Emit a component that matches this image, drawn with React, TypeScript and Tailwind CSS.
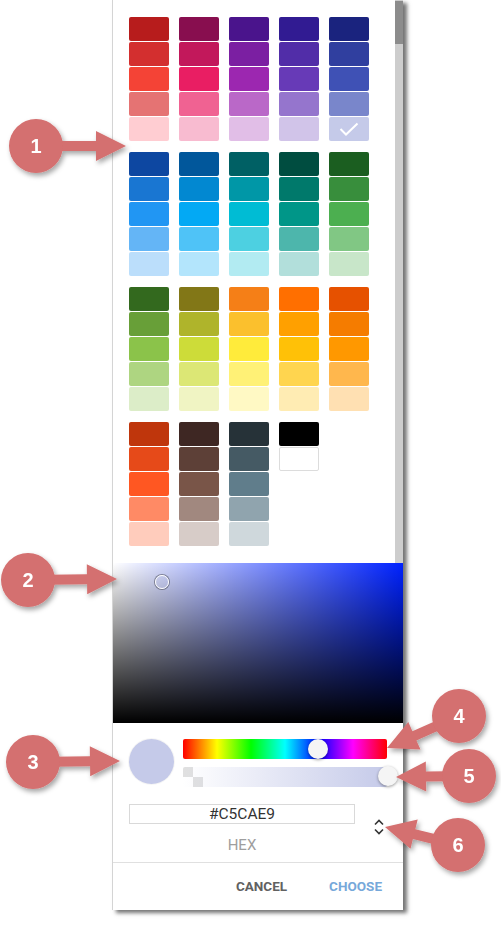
import React from 'react';

// Material palette columns, shades 900 / 700 / 500 / 300 / 100
const swatchGroups: string[][][] = [
  [
    ['bg-[#b71c1c]', 'bg-[#d32f2f]', 'bg-[#f44336]', 'bg-[#e57373]', 'bg-[#ffcdd2]'],
    ['bg-[#880e4f]', 'bg-[#c2185b]', 'bg-[#e91e63]', 'bg-[#f06292]', 'bg-[#f8bbd0]'],
    ['bg-[#4a148c]', 'bg-[#7b1fa2]', 'bg-[#9c27b0]', 'bg-[#ba68c8]', 'bg-[#e1bee7]'],
    ['bg-[#311b92]', 'bg-[#512da8]', 'bg-[#673ab7]', 'bg-[#9575cd]', 'bg-[#d1c4e9]'],
    ['bg-[#1a237e]', 'bg-[#303f9f]', 'bg-[#3f51b5]', 'bg-[#7986cb]', 'bg-[#c5cae9]'],
  ],
  [
    ['bg-[#0d47a1]', 'bg-[#1976d2]', 'bg-[#2196f3]', 'bg-[#64b5f6]', 'bg-[#bbdefb]'],
    ['bg-[#01579b]', 'bg-[#0288d1]', 'bg-[#03a9f4]', 'bg-[#4fc3f7]', 'bg-[#b3e5fc]'],
    ['bg-[#006064]', 'bg-[#0097a7]', 'bg-[#00bcd4]', 'bg-[#4dd0e1]', 'bg-[#b2ebf2]'],
    ['bg-[#004d40]', 'bg-[#00796b]', 'bg-[#009688]', 'bg-[#4db6ac]', 'bg-[#b2dfdb]'],
    ['bg-[#1b5e20]', 'bg-[#388e3c]', 'bg-[#4caf50]', 'bg-[#81c784]', 'bg-[#c8e6c9]'],
  ],
  [
    ['bg-[#33691e]', 'bg-[#689f38]', 'bg-[#8bc34a]', 'bg-[#aed581]', 'bg-[#dcedc8]'],
    ['bg-[#827717]', 'bg-[#afb42b]', 'bg-[#cddc39]', 'bg-[#dce775]', 'bg-[#f0f4c3]'],
    ['bg-[#f57f17]', 'bg-[#fbc02d]', 'bg-[#ffeb3b]', 'bg-[#fff176]', 'bg-[#fff9c4]'],
    ['bg-[#ff6f00]', 'bg-[#ffa000]', 'bg-[#ffc107]', 'bg-[#ffd54f]', 'bg-[#ffecb3]'],
    ['bg-[#e65100]', 'bg-[#f57c00]', 'bg-[#ff9800]', 'bg-[#ffb74d]', 'bg-[#ffe0b2]'],
  ],
  [
    ['bg-[#bf360c]', 'bg-[#e64a19]', 'bg-[#ff5722]', 'bg-[#ff8a65]', 'bg-[#ffccbc]'],
    ['bg-[#3e2723]', 'bg-[#5d4037]', 'bg-[#795548]', 'bg-[#a1887f]', 'bg-[#d7ccc8]'],
    ['bg-[#263238]', 'bg-[#455a64]', 'bg-[#607d8b]', 'bg-[#90a4ae]', 'bg-[#cfd8dc]'],
    ['bg-black', 'bg-white border border-[#dcdcdc]'],
    [],
  ],
];

const SELECTED = 'bg-[#c5cae9]';

// numbered callouts: circle centre, then where the arrow points
const callouts = [
  { n: 1, cx: 36, cy: 146, tx: 126, ty: 146 },
  { n: 2, cx: 28, cy: 580, tx: 117, ty: 579 },
  { n: 3, cx: 33, cy: 762, tx: 120, ty: 761 },
  { n: 4, cx: 459, cy: 716, tx: 387, ty: 748 },
  { n: 5, cx: 469, cy: 776, tx: 396, ty: 777 },
  { n: 6, cx: 458, cy: 845, tx: 385, ty: 827 },
];

function arrowPoints(x1: number, y1: number, x2: number, y2: number) {
  const shaft = 5;
  const head = 15;
  const headLen = 30;
  const len = Math.hypot(x2 - x1, y2 - y1);
  const ux = (x2 - x1) / len;
  const uy = (y2 - y1) / len;
  const nx = -uy;
  const ny = ux;
  const bx = x2 - ux * headLen;
  const by = y2 - uy * headLen;
  const pts = [
    [x1 + nx * shaft, y1 + ny * shaft],
    [bx + nx * shaft, by + ny * shaft],
    [bx + nx * head, by + ny * head],
    [x2, y2],
    [bx - nx * head, by - ny * head],
    [bx - nx * shaft, by - ny * shaft],
    [x1 - nx * shaft, y1 - ny * shaft],
  ];
  return pts.map((p) => p.map((v) => v.toFixed(1)).join(',')).join(' ');
}

function Swatch({ cls }: { cls: string }) {
  return (
    <div className={`flex h-[24px] w-[40px] items-center justify-center rounded-[2px] ${cls}`}>
      {cls === SELECTED && (
        <svg width="20" height="14" viewBox="0 0 20 14">
          <polyline points="1.5,7 7,12.5 18.5,1.5" fill="none" stroke="#fff" strokeWidth="2" />
        </svg>
      )}
    </div>
  );
}

function Callouts() {
  return (
    <svg className="pointer-events-none absolute inset-0" width="501" height="926">
      <defs>
        <filter id="callout-shadow" x="-30%" y="-30%" width="160%" height="160%">
          <feDropShadow dx="2" dy="3" stdDeviation="2.5" floodColor="#000" floodOpacity="0.35" />
        </filter>
      </defs>
      {callouts.map((c) => (
        <g key={c.n} filter="url(#callout-shadow)">
          <polygon points={arrowPoints(c.cx, c.cy, c.tx, c.ty)} fill="#d46f6f" />
          <circle cx={c.cx} cy={c.cy} r="27" fill="#d46f6f" />
          <text
            x={c.cx}
            y={c.cy + 7}
            textAnchor="middle"
            fill="#fff"
            fontSize="20"
            fontWeight="700"
            fontFamily="'Liberation Sans', Arial, sans-serif"
          >
            {c.n}
          </text>
        </g>
      ))}
    </svg>
  );
}

export default function App() {
  return (
    <div className="relative h-[926px] w-[501px] overflow-hidden bg-white font-['Roboto',sans-serif]">
      <div className="pl-[112px]">
        <div className="w-[291px] border-l border-[#d4d4d4] bg-white shadow-[4px_3px_4px_rgba(0,0,0,0.55)]">
          {/* palette list with its scrollbar */}
          <div className="flex h-[563px]">
            <div className="flex flex-1 flex-col gap-[11px] pl-4 pt-[17px]">
              {swatchGroups.map((group, gi) => (
                <div key={gi} className="flex gap-[10px]">
                  {group.map((col, ci) => (
                    <div key={ci} className="flex w-[40px] flex-col gap-px">
                      {col.map((cls) => (
                        <Swatch key={cls} cls={cls} />
                      ))}
                    </div>
                  ))}
                </div>
              ))}
            </div>
            <div className="w-[8px] bg-[#cdcdcd] pt-px">
              <div className="h-[43px] bg-[#8c8c8c]" />
            </div>
          </div>

          {/* saturation / value field */}
          <div className="relative h-[160px] bg-[#0022ff] bg-[linear-gradient(to_top,#000,transparent),linear-gradient(to_right,#fff,transparent)]">
            <div className="absolute left-[42px] top-[12px] h-[14px] w-[14px] rounded-full border-[1.5px] border-white shadow-[0_0_0_1px_rgba(0,0,0,0.35)]" />
          </div>

          <div className="px-4 pt-4">
            <div className="flex gap-[9px]">
              <div className="h-[45px] w-[45px] rounded-full bg-[#c5cae9] shadow-[0_0_0_1px_rgba(0,0,0,0.04)]" />
              <div className="flex w-[204px] flex-col gap-[8px]">
                <div className="relative h-[20px] rounded-[2px] bg-[linear-gradient(to_right,#f00,#ff0,#0f0,#0ff,#00f,#f0f,#f00)]">
                  <div className="absolute left-[125px] top-0 h-[20px] w-[20px] rounded-full bg-[#f5f5f5] shadow-[0_1px_3px_rgba(0,0,0,0.4)]" />
                </div>
                <div className="relative h-[20px] rounded-[2px] bg-white bg-[linear-gradient(to_right,rgba(197,202,233,0),#c5cae9),repeating-conic-gradient(#fff_0_25%,#e0e0e0_0_50%)] bg-[length:100%_100%,20px_20px] bg-no-repeat">
                  <div className="absolute left-[195px] top-[-1px] h-[20px] w-[20px] rounded-full bg-[#f5f5f5] shadow-[0_1px_3px_rgba(0,0,0,0.4)]" />
                </div>
              </div>
            </div>

            <div className="mt-[17px] flex items-center pb-[7px]">
              <div className="flex w-[226px] flex-col items-center">
                <input
                  readOnly
                  value="#C5CAE9"
                  className="h-[20px] w-full border border-[#d9d9d9] bg-white text-center text-[15.5px] leading-[18px] text-[#333] outline-none"
                />
                <div className="mt-[11px] text-[15px] leading-[20px] text-[#9e9e9e]">HEX</div>
              </div>
              <svg className="mb-[5px] ml-[19px]" width="10" height="16" viewBox="0 0 10 16">
                <polyline points="1,5.5 5,1.5 9,5.5" fill="none" stroke="#333" strokeWidth="1.6" />
                <polyline points="1,10.5 5,14.5 9,10.5" fill="none" stroke="#333" strokeWidth="1.6" />
              </svg>
            </div>
          </div>

          <div className="flex h-[48px] items-center justify-end gap-[42px] border-t border-[#e0e0e0] pr-[21px] text-[13.5px] font-bold">
            <span className="text-[#616161]">CANCEL</span>
            <span className="text-[#76a8da]">CHOOSE</span>
          </div>
        </div>
      </div>
      <Callouts />
    </div>
  );
}
